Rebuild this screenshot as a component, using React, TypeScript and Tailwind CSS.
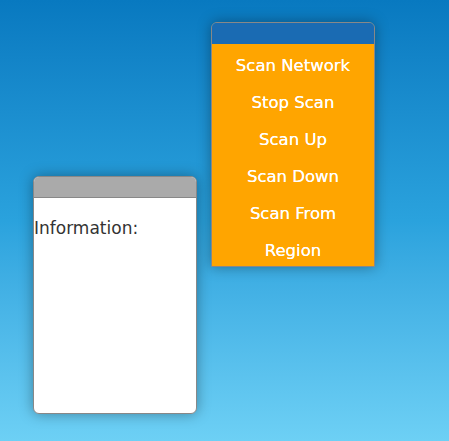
const menuItems = ['Scan Network', 'Stop Scan', 'Scan Up', 'Scan Down', 'Scan From', 'Region'];

export default function App() {
  return (
    <div
      className="relative w-[449px] h-[441px] overflow-hidden bg-gradient-to-b from-[#0879c0] via-[#2aa2dd] to-[#6dd0f5]"
      style={{ fontFamily: '"DejaVu Sans", Verdana, sans-serif' }}
    >
      {/* Scan menu window */}
      <div className="absolute left-[211px] top-[22px] w-[164px] border border-[#888] rounded-t-[6px] shadow-[0_0_14px_rgba(0,0,0,0.35)] overflow-hidden">
        <div className="h-[21px] bg-[#1a6bb3]" />
        <ul className="bg-[#ffa500]">
          {menuItems.map((item) => (
            <li
              key={item}
              className="h-[37px] pt-[7px] flex items-center justify-center text-white text-[16.5px] [text-shadow:0_0_0.4px_#fff]"
            >
              {item}
            </li>
          ))}
        </ul>
      </div>

      {/* Information window */}
      <div className="absolute left-[33px] top-[176px] w-[164px] h-[238px] border border-[#888] rounded-[6px] bg-white shadow-[0_0_14px_rgba(0,0,0,0.35)] overflow-hidden">
        <div className="h-[21px] bg-[#aaaaaa] border-b border-[#888]" />
        <p className="pt-[20px] text-[17px] leading-[20px] text-[#333]">Information:</p>
      </div>
    </div>
  );
}
